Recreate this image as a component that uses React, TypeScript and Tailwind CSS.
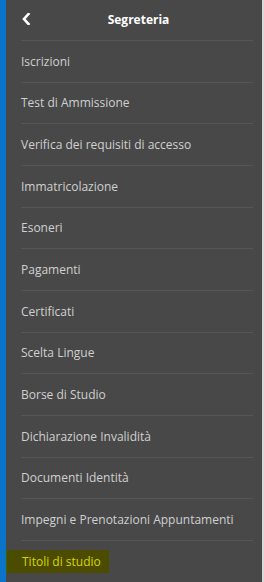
import React from "react";

const items = [
  "Iscrizioni",
  "Test di Ammissione",
  "Verifica dei requisiti di accesso",
  "Immatricolazione",
  "Esoneri",
  "Pagamenti",
  "Certificati",
  "Scelta Lingue",
  "Borse di Studio",
  "Dichiarazione Invalidità",
  "Documenti Identità",
  "Impegni e Prenotazioni Appuntamenti",
];

export default function App() {
  return (
    <div
      className="flex w-[264px] h-[582px] bg-[#484848] overflow-hidden"
      style={{ fontFamily: '"Open Sans", sans-serif' }}
    >
      <div className="w-[6px] shrink-0 bg-[#0b74c8]" />
      <div className="flex-1 flex flex-col pl-[15px] pr-[9px]">
        <div className="h-[41px] shrink-0 flex items-center border-b border-[#565656] relative">
          <svg width="9" height="12" viewBox="0 0 9 12" className="absolute left-[1px] top-[13px]">
            <path d="M6.5 1 L2 6 L6.5 11" stroke="#ffffff" strokeWidth="2.6" fill="none" strokeLinecap="square" strokeLinejoin="miter" />
          </svg>
          <div className="flex-1 text-center text-[12px] font-bold text-white pl-[3px]">Segreteria</div>
        </div>
        {items.map((t) => (
          <div
            key={t}
            className="h-[41.67px] shrink-0 flex items-center border-b border-[#565656] text-[12px] text-[#d0d0d0] whitespace-nowrap pt-[1px]"
          >
            {t}
          </div>
        ))}
        <div className="h-[41px] shrink-0 flex items-center pt-[1px]">
          <div className="ml-[-15px] pl-[15px] pr-[8px] h-[23px] flex items-center bg-[#4c4c00] border-l border-[#2f6a00] text-[12px] text-[#d6d600]">
            Titoli di studio
          </div>
        </div>
      </div>
      <div className="w-[2px] shrink-0 bg-[#d9d9d9]" />
    </div>
  );
}
